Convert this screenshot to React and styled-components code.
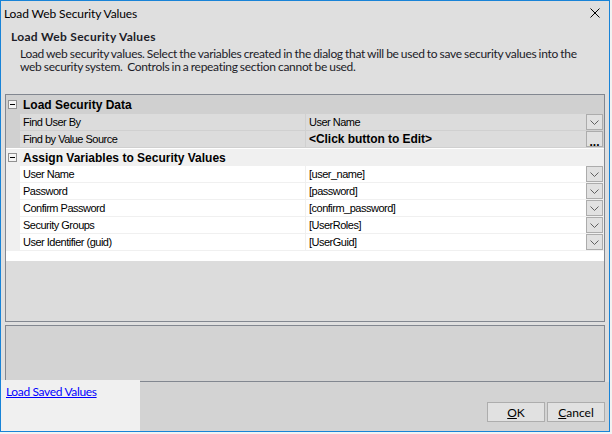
import React from 'react';
import styled, { createGlobalStyle } from 'styled-components';

const uiFont = `Lato, 'Noto Sans', sans-serif`;
const gridFont = `'Liberation Sans', Arial, sans-serif`;

const GlobalStyle = createGlobalStyle`
  html, body {
    margin: 0;
    padding: 0;
    background: #f2f2f2;
  }
  body {
    width: 612px;
    height: 434px;
    overflow: hidden;
  }
`;

const Window = styled.div`
  box-sizing: border-box;
  width: 610px;
  height: 432px;
  border: 1px solid #1883d7;
  background: #dfdfdf;
  display: flex;
  flex-direction: column;
  font-family: ${uiFont};
  color: #000;
`;

const TitleBar = styled.div`
  height: 24px;
  display: flex;
  align-items: center;
  justify-content: space-between;
  padding: 0 9px 0 3px;
  font-size: 12px;
  letter-spacing: -0.1px;
`;

const Header = styled.div`
  box-sizing: border-box;
  height: 69px;
  padding: 4px 0 0 10px;
  color: #1c1c28;
`;

const HeaderTitle = styled.div`
  font-weight: bold;
  font-size: 12px;
  line-height: 16px;
  letter-spacing: 0.3px;
`;

const HeaderText = styled.div`
  margin: 2px 0 0 9px;
  font-size: 12px;
  line-height: 13px;
  letter-spacing: -0.3px;
  word-spacing: -0.5px;
  white-space: pre;
`;

const Grid = styled.div`
  box-sizing: border-box;
  margin: 0 4px;
  height: 228px;
  border: 1px solid #828790;
  background: #dcdcdc;
  display: flex;
  flex-direction: column;
  font-family: ${gridFont};
  font-size: 11px;
  letter-spacing: -0.5px;
`;

const tones = {
  muted: { band: '#d0d0d0', row: '#dcdcdc', line: '#d0d0d0' },
  plain: { band: '#f0f0f0', row: '#ffffff', line: '#f0f0f0' },
};

const Category = styled.div`
  box-sizing: border-box;
  height: ${p => (p.tone === 'plain' ? '18px' : '19px')};
  display: flex;
  align-items: center;
  background: ${p => tones[p.tone].band};
  border-top: ${p => (p.tone === 'plain' ? '1px solid #fff' : '0')};
  font-size: 12px;
  font-weight: bold;
  letter-spacing: 0;
`;

const Toggle = styled.span`
  box-sizing: border-box;
  width: 9px;
  height: 9px;
  margin: 0 6px 0 2px;
  border: 1px solid #919191;
  background: #f4f4f4;
  display: flex;
  align-items: center;
  justify-content: center;
  &::after {
    content: '';
    width: 5px;
    height: 1px;
    background: #000;
  }
`;

const Row = styled.div`
  display: grid;
  grid-template-columns: 14px 286px 297px;
  height: 17px;
  background: ${p => tones[p.tone].band};
`;

const Cell = styled.div`
  box-sizing: border-box;
  height: 17px;
  display: flex;
  align-items: center;
  padding-left: 3px;
  background: ${p => tones[p.tone].row};
  border-bottom: 1px solid ${p => tones[p.tone].line};
  white-space: nowrap;
`;

const Label = styled(Cell)`
  border-right: 1px solid ${p => tones[p.tone].line};
`;

const Value = styled(Cell)`
  justify-content: space-between;
  font-weight: ${p => (p.bold ? 'bold' : 'normal')};
  font-size: ${p => (p.bold ? '12px' : '11px')};
  letter-spacing: ${p => (p.bold ? '-0.05px' : '-0.5px')};
`;

const DropButton = styled.span`
  box-sizing: border-box;
  width: 17px;
  height: 16px;
  border: 1px solid #acacac;
  background: #e1e1e1;
  display: flex;
  align-items: center;
  justify-content: center;
  font-size: 12px;
  font-weight: bold;
  letter-spacing: 0;
  line-height: 1;
  color: #000;
`;

const Dots = styled.span`
  margin-top: 5px;
`;

const Spacer = styled.div`
  height: 10px;
  background: #fff;
`;

const HelpPanel = styled.div`
  box-sizing: border-box;
  margin: 3px 4px 0;
  height: 57px;
  border: 1px solid #828790;
  background: #d3d3d3;
`;

const Footer = styled.div`
  flex: 1;
  display: flex;
  background: #d3d3d3;
`;

const LinkArea = styled.div`
  position: relative;
  width: 134px;
  margin-top: -2px;
  padding: 4px 0 0 5px;
  background: #f0f0f0;
  font-size: 12px;
  line-height: 16px;
  letter-spacing: -0.35px;
`;

const Link = styled.a`
  color: #0000ff;
  text-decoration: underline;
  cursor: pointer;
`;

const Buttons = styled.div`
  margin-left: auto;
  padding: 20px 4px 0 0;
  display: flex;
  gap: 2px;
`;

const Button = styled.button`
  box-sizing: border-box;
  width: 58px;
  height: 20px;
  padding: 0;
  border: 1px solid #adadad;
  background: #e1e1e1;
  font-family: ${uiFont};
  font-size: 12px;
  color: #000;
`;

const Chevron = () => (
  <svg width="9" height="5" viewBox="0 0 9 5">
    <polyline points="0.5,0.5 4.5,4.5 8.5,0.5" fill="none" stroke="#606060" strokeWidth="1" />
  </svg>
);

const CloseIcon = () => (
  <svg width="10" height="10" viewBox="0 0 10 10">
    <path d="M0.5 0.5 L9.5 9.5 M9.5 0.5 L0.5 9.5" stroke="#000" strokeWidth="1" />
  </svg>
);

const sections = [
  {
    title: 'Load Security Data',
    tone: 'muted',
    rows: [
      { label: 'Find User By', value: 'User Name', button: 'drop' },
      { label: 'Find by Value Source', value: '<Click button to Edit>', bold: true, button: 'dots' },
    ],
  },
  {
    title: 'Assign Variables to Security Values',
    tone: 'plain',
    rows: [
      { label: 'User Name', value: '[user_name]', button: 'drop' },
      { label: 'Password', value: '[password]', button: 'drop' },
      { label: 'Confirm Password', value: '[confirm_password]', button: 'drop' },
      { label: 'Security Groups', value: '[UserRoles]', button: 'drop' },
      { label: 'User Identifier (guid)', value: '[UserGuid]', button: 'drop' },
    ],
  },
];

export default function App() {
  return (
    <>
      <GlobalStyle />
      <Window>
        <TitleBar>
          <span>Load Web Security Values</span>
          <CloseIcon />
        </TitleBar>
        <Header>
          <HeaderTitle>Load Web Security Values</HeaderTitle>
          <HeaderText>
            {'Load web security values. Select the variables created in the dialog that will be used to save security values into the\nweb security system.  Controls in a repeating section cannot be used.'}
          </HeaderText>
        </Header>
        <Grid>
          {sections.map(section => (
            <React.Fragment key={section.title}>
              <Category tone={section.tone}>
                <Toggle />
                {section.title}
              </Category>
              {section.rows.map(row => (
                <Row key={row.label} tone={section.tone}>
                  <span />
                  <Label tone={section.tone}>{row.label}</Label>
                  <Value tone={section.tone} bold={row.bold}>
                    <span>{row.value}</span>
                    <DropButton>
                      {row.button === 'dots' ? <Dots>...</Dots> : <Chevron />}
                    </DropButton>
                  </Value>
                </Row>
              ))}
            </React.Fragment>
          ))}
          <Spacer />
        </Grid>
        <HelpPanel />
        <Footer>
          <LinkArea>
            <Link>Load Saved Values</Link>
          </LinkArea>
          <Buttons>
            <Button><u>O</u>K</Button>
            <Button><u>C</u>ancel</Button>
          </Buttons>
        </Footer>
      </Window>
    </>
  );
}
